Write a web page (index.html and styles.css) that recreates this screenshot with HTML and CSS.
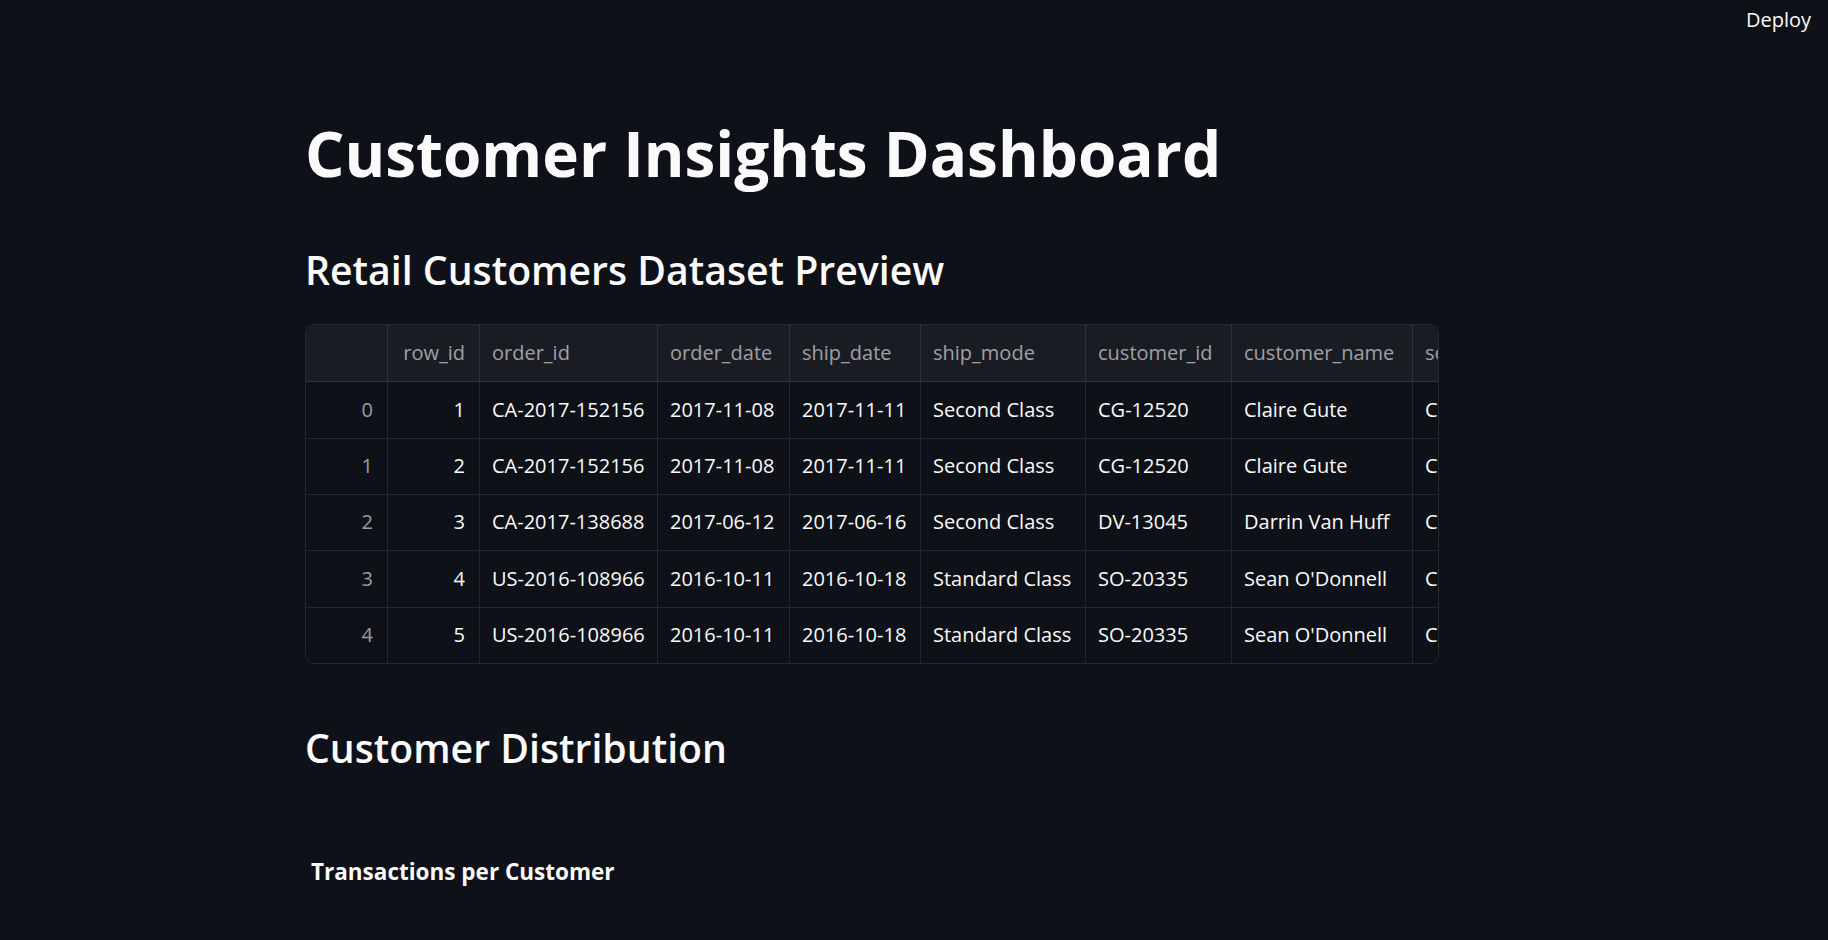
FILE: index.html
```html
<!DOCTYPE html>
<html lang="en">
<head>
<meta charset="utf-8">
<title>Customer Insights Dashboard</title>
<link rel="stylesheet" href="styles.css">
</head>
<body>
<header class="topbar">
  <button class="deploy">Deploy</button>
</header>
<main class="main">
  <h1 class="title">Customer Insights Dashboard</h1>
  <h3 class="subheader">Retail Customers Dataset Preview</h3>
  <div class="frame">
    <div class="row head h57">
      <div class="cell num"></div>
      <div class="cell num">row_id</div>
      <div class="cell">order_id</div>
      <div class="cell">order_date</div>
      <div class="cell">ship_date</div>
      <div class="cell">ship_mode</div>
      <div class="cell">customer_id</div>
      <div class="cell">customer_name</div>
      <div class="cell">segment</div>
    </div>
    <div class="row h57">
      <div class="cell num idx">0</div>
      <div class="cell num">1</div>
      <div class="cell">CA-2017-152156</div>
      <div class="cell">2017-11-08</div>
      <div class="cell">2017-11-11</div>
      <div class="cell">Second Class</div>
      <div class="cell">CG-12520</div>
      <div class="cell">Claire Gute</div>
      <div class="cell">Consumer</div>
    </div>
    <div class="row h56">
      <div class="cell num idx">1</div>
      <div class="cell num">2</div>
      <div class="cell">CA-2017-152156</div>
      <div class="cell">2017-11-08</div>
      <div class="cell">2017-11-11</div>
      <div class="cell">Second Class</div>
      <div class="cell">CG-12520</div>
      <div class="cell">Claire Gute</div>
      <div class="cell">Consumer</div>
    </div>
    <div class="row h56">
      <div class="cell num idx">2</div>
      <div class="cell num">3</div>
      <div class="cell">CA-2017-138688</div>
      <div class="cell">2017-06-12</div>
      <div class="cell">2017-06-16</div>
      <div class="cell">Second Class</div>
      <div class="cell">DV-13045</div>
      <div class="cell">Darrin Van Huff</div>
      <div class="cell">Corporate</div>
    </div>
    <div class="row h57">
      <div class="cell num idx">3</div>
      <div class="cell num">4</div>
      <div class="cell">US-2016-108966</div>
      <div class="cell">2016-10-11</div>
      <div class="cell">2016-10-18</div>
      <div class="cell">Standard Class</div>
      <div class="cell">SO-20335</div>
      <div class="cell">Sean O'Donnell</div>
      <div class="cell">Consumer</div>
    </div>
    <div class="row h55 last">
      <div class="cell num idx">4</div>
      <div class="cell num">5</div>
      <div class="cell">US-2016-108966</div>
      <div class="cell">2016-10-11</div>
      <div class="cell">2016-10-18</div>
      <div class="cell">Standard Class</div>
      <div class="cell">SO-20335</div>
      <div class="cell">Sean O'Donnell</div>
      <div class="cell">Consumer</div>
    </div>
  </div>
  <h3 class="subheader section">Customer Distribution</h3>
  <div class="chart">
    <div class="chart-title">Transactions per Customer</div>
  </div>
</main>
</body>
</html>
```
FILE: styles.css
```css
* { box-sizing: border-box; }

html, body {
  margin: 0;
  padding: 0;
  background: #0e1117;
  color: #fafafa;
  font-family: "Open Sans", "Noto Sans", sans-serif;
}

body { overflow: hidden; }

.topbar {
  display: flex;
  justify-content: flex-end;
  padding: 8px 17px 0 0;
}

.deploy {
  background: none;
  border: none;
  padding: 0;
  margin: 0;
  color: #fafafa;
  font-family: "Open Sans", "Noto Sans", sans-serif;
  font-size: 20px;
  font-weight: 400;
  line-height: 24px;
  cursor: pointer;
}

.main {
  padding-left: 305px;
  width: 1439px;
}

.title {
  margin: 81px 0 0 0;
  font-size: 62px;
  font-weight: 700;
  line-height: 80px;
}

.subheader {
  margin: 51px 0 0 0;
  font-size: 39.2px;
  font-weight: 600;
  line-height: 52px;
}

.subheader.section { margin-top: 58px; }

.frame {
  margin-top: 28px;
  width: 1134px;
  border: 1px solid rgba(250, 250, 250, 0.1);
  border-radius: 9px;
  overflow: hidden;
  background: #0e1117;
}

.row {
  display: grid;
  grid-template-columns: 82px 92px 178px 132px 131px 165px 146px 181px 150px;
  border-bottom: 1px solid rgba(250, 250, 250, 0.1);
  font-size: 20px;
}

.row.last { border-bottom: none; }
.h57 { height: 57px; }
.h56 { height: 56px; }
.h55 { height: 55px; }

.row.head {
  background: #1a1c24;
  color: rgba(250, 250, 250, 0.6);
}

.cell {
  display: flex;
  align-items: center;
  padding: 0 12px 2px 12px;
  border-right: 1px solid rgba(250, 250, 250, 0.1);
  white-space: nowrap;
  overflow: hidden;
}

.cell.num {
  justify-content: flex-end;
  padding-right: 14px;
}

.cell.idx { color: rgba(250, 250, 250, 0.6); }

.chart-title {
  margin-top: 83px;
  padding-left: 6px;
  font-size: 22.5px;
  font-weight: 700;
  line-height: 30px;
}
```
